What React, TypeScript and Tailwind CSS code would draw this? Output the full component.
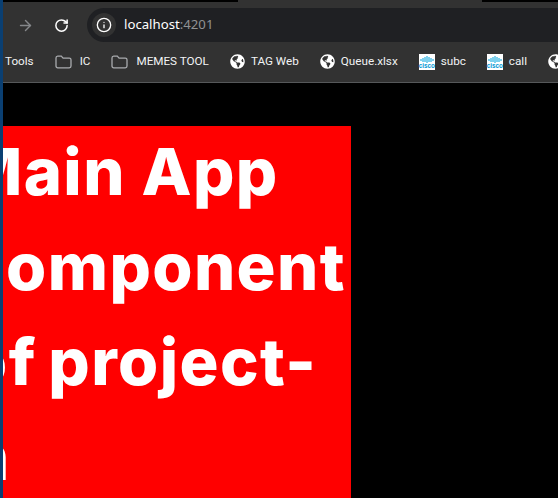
import React from "react";
import { ArrowRight, Info, RotateCw } from "lucide-react";
import { FaGlobeAmericas } from "react-icons/fa";

const Folder = () => (
  <svg width="17" height="14" viewBox="0 0 17 14" fill="none" stroke="#a9abae" strokeWidth="1.3">
    <path d="M1 3c0-1.1.6-1.900 1.700-1.900h3.600l1.800 2h6.200c1 0 1.700.7 1.700 1.700v6.300c0 1-.7 1.700-1.700 1.700H2.700c-1 0-1.700-.7-1.700-1.700z" />
  </svg>
);

const Globe = () => <FaGlobeAmericas className="text-[15px] text-white" />;

const Cisco = () => (
  <div className="flex h-4 w-4 flex-col items-center bg-white pt-[2px]">
    <svg width="14" height="7" viewBox="0 0 14 7" stroke="#00a3dc" strokeWidth="1">
      <path d="M1 3v2M3 2v4M5 1v5M7 0v7M9 1v5M11 2v4M13 3v2" />
    </svg>
    <span className="font-['Liberation_Sans',sans-serif] text-[6.300px] leading-[6px] font-bold text-[#0098d4]">
      cisco
    </span>
  </div>
);

const bookmarks = [
  { icon: <Folder />, label: "IC", gap: "gap-[8px]" },
  { icon: <Folder />, label: "MEMES TOOL", gap: "gap-[8px]" },
  { icon: <Globe />, label: "TAG Web", gap: "gap-[6px]" },
  { icon: <Globe />, label: "Queue.xlsx", gap: "gap-[6px]" },
  { icon: <Cisco />, label: "subc", gap: "gap-[6px]" },
  { icon: <Cisco />, label: "call", gap: "gap-[6px]" },
];

const lines = [
  { text: "Main App", cls: "ml-[-42px]" },
  { text: "component", cls: "ml-[-37px]" },
  { text: "of project-", cls: "ml-[-36px] [word-spacing:-4px]" },
  { text: "n", cls: "ml-[-35px]" },
];

export default function App() {
  return (
    <div className="flex h-[498px] w-[558px] overflow-hidden bg-black font-['Roboto',sans-serif]">
      <div className="h-full w-[3px] shrink-0 bg-[#0a3f72]" />
      <div className="flex min-w-0 flex-1 flex-col">
        <div className="flex h-[2px] shrink-0">
          <div className="w-[235px] bg-black" />
          <div className="flex-1 bg-[#323232]" />
          <div className="w-[76px] bg-black" />
        </div>
        <div className="flex h-[40px] shrink-0 items-center bg-[#323232] pt-[6px]">
          <ArrowRight className="ml-[14px] text-[#85878a]" size={17} strokeWidth={2} />
          <RotateCw className="ml-[20px] text-white" size={15} strokeWidth={2.4} />
          <div className="ml-[18px] flex h-[34px] flex-1 items-center rounded-l-[17px] bg-[#1f2023] pl-[5px]">
            <div className="flex h-[24px] w-[24px] items-center justify-center rounded-full bg-[#323232]">
              <Info className="text-white" size={16} strokeWidth={2} />
            </div>
            <span className="ml-[8px] font-['Noto_Sans',sans-serif] text-[13.2px] text-white">
              localhost<span className="text-[#8f9194]">:4201</span>
            </span>
          </div>
        </div>
        <div className="flex h-[41px] shrink-0 items-center overflow-hidden border-b border-[#56585a] bg-[#323232] pl-[2px] text-[11.7px] whitespace-nowrap text-[#f1f3f4]">
          <span>Tools</span>
          <div className="ml-[21px] flex items-center gap-[21px]">
            {bookmarks.map((b) => (
              <div key={b.label} className={`flex items-center ${b.gap}`}>
                {b.icon}
                <span>{b.label}</span>
              </div>
            ))}
            <Globe />
          </div>
        </div>
        <div className="mt-[43px] flex w-[348px] flex-1 flex-col overflow-hidden bg-[#ff0000] font-['Inter',sans-serif] text-[65px] leading-[95px] font-extrabold tracking-[1.4px] text-white">
          <div className="mt-[-2px]">
            {lines.map((l) => (
              <div key={l.text} className={`whitespace-nowrap ${l.cls}`}>
                {l.text}
              </div>
            ))}
          </div>
        </div>
      </div>
    </div>
  );
}
